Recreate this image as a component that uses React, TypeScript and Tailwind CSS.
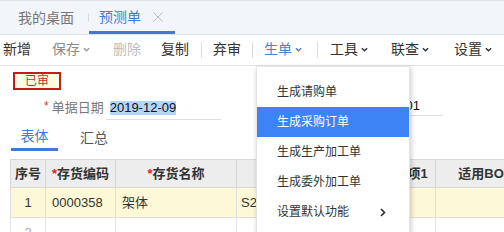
import React from 'react';

function Chevron({ color }: { color: string }) {
  return (
    <svg width="7" height="5" viewBox="0 0 8 5" className="ml-[3px]">
      <path d="M1 1 L4 4 L7 1" fill="none" stroke={color} strokeWidth="1.7" />
    </svg>
  );
}

function Sep({ ml }: { ml: string }) {
  return <span className={`${ml} w-px h-[16px] bg-[#dcdcdc]`} />;
}

const menuItems = ['生成请购单', '生成采购订单', '生成生产加工单', '生成委外加工单', '设置默认功能'];

export default function App() {
  return (
    <div className="relative w-[504px] h-[232px] overflow-hidden bg-white text-[#333] font-['Liberation_Sans','Noto_Sans_CJK_SC',sans-serif]">
      {/* window tabs */}
      <div className="h-[35px] bg-[#f2f5fa] border-t border-[#e2e5ea] border-b border-b-[#dde1e7] flex items-stretch text-[14px]">
        <div className="w-[88px] flex items-center pl-[18px] pt-[2px] text-[#777]">我的桌面</div>
        <div className="w-px bg-[#d9dde3] my-[12px]" />
        <div className="w-[86px] flex items-center pl-[10px] pt-[2px] border-b-[3px] border-[#3f7ad6] text-[#3f7ad6]">
          <span>预测单</span>
          <svg width="10" height="10" viewBox="0 0 10 10" className="ml-[12px]">
            <path d="M0.5 0.5 L9.5 9.5 M9.5 0.5 L0.5 9.5" stroke="#bcbcbc" strokeWidth="1" />
          </svg>
        </div>
      </div>

      {/* toolbar */}
      <div className="h-[31px] border-b border-[#e3e3e3] flex items-center text-[14px] pb-[1px]">
        <span className="ml-[3px]">新增</span>
        <span className="ml-[21px] flex items-center text-[#8a8a8a]">保存<Chevron color="#9a9a9a" /></span>
        <span className="ml-[23px] text-[#bdbdbd]">删除</span>
        <span className="ml-[20px]">复制</span>
        <Sep ml="ml-[12px]" />
        <span className="ml-[11px]">弃审</span>
        <Sep ml="ml-[11px]" />
        <span className="ml-[11px] flex items-center text-[#4a80d6]">生单<Chevron color="#4a80d6" /></span>
        <Sep ml="ml-[15px]" />
        <span className="ml-[12px] flex items-center">工具<Chevron color="#333" /></span>
        <span className="ml-[23px] flex items-center">联查<Chevron color="#333" /></span>
        <span className="ml-[25px] flex items-center">设置<Chevron color="#333" /></span>
      </div>

      {/* form */}
      <div className="pt-[6px]">
        <div className="ml-[13px] w-[48px] h-[18px] border-2 border-[#c41c1c] bg-[#fffbe3] flex items-center justify-center text-[12px] text-[#b8322a] leading-none">
          已审
        </div>
        <div className="flex items-start mt-[6px] text-[13px]">
          <div className="flex items-center h-[24px]">
            <span className="ml-[44px] text-[#d33] text-[12px] -mt-[4px]">*</span>
            <span className="ml-[3px] text-[#777]">单据日期</span>
          </div>
          <div className="ml-[2px] w-[115px] h-[24px] border-b border-[#dedede] flex items-center pl-[4px]">
            <span className="bg-[#b4d5fd] leading-[14px] text-[#111]">2019-12-09</span>
          </div>
          <div className="ml-[68px] flex items-center h-[20px]">
            <span className="text-[#777]">单据编号</span>
          </div>
          <div className="ml-[4px] w-[98px] h-[20px] border-b border-[#dedede] flex items-center pl-[3px]">
            <span className="text-[#111]">0000000001</span>
          </div>
        </div>

        {/* inner tabs */}
        <div className="flex mt-[5px] pl-[11px] text-[14px]">
          <div className="w-[47px] h-[26px] border-b-[3px] border-[#3d7bd8] text-[#3d7bd8] flex items-center justify-center">表体</div>
          <div className="ml-[22px] h-[26px] flex items-center text-[#555]">汇总</div>
        </div>

        {/* grid */}
        <div className="mt-[8px] ml-[10px] w-[494px] overflow-hidden">
          <table className="table-fixed border-collapse text-[13px] w-[527px]">
            <colgroup>
              <col className="w-[35px]" />
              <col className="w-[70px]" />
              <col className="w-[121px]" />
              <col className="w-[124px]" />
              <col className="w-[75px]" />
              <col className="w-[102px]" />
            </colgroup>
            <thead>
              <tr className="h-[28px] bg-[#ededed] font-semibold">
                <th className="border border-[#d8d8d8] font-semibold">序号</th>
                <th className="border border-[#d8d8d8] font-semibold"><span className="text-[#d22]">*</span>存货编码</th>
                <th className="border border-[#d8d8d8] font-semibold"><span className="text-[#d22]">*</span>存货名称</th>
                <th className="border border-[#d8d8d8] font-semibold">规格型号</th>
                <th className="border border-[#d8d8d8] font-semibold whitespace-nowrap">自定义项1</th>
                <th className="border border-[#d8d8d8] font-semibold whitespace-nowrap">适用BOM</th>
              </tr>
            </thead>
            <tbody>
              <tr className="h-[30px] bg-[#fdf8d5]">
                <td className="border border-[#dedede] text-center">1</td>
                <td className="border border-[#dedede] pl-[6px]">0000358</td>
                <td className="border border-[#dedede] pl-[6px]">架体</td>
                <td className="border border-[#dedede] pl-[4px]">S2</td>
                <td className="border border-[#dedede]" />
                <td className="border border-[#dedede]" />
              </tr>
              <tr className="h-[30px]">
                <td className="border border-[#e4e4e4] text-center text-[#aaa]">2</td>
                <td className="border border-[#e4e4e4]" />
                <td className="border border-[#e4e4e4]" />
                <td className="border border-[#e4e4e4]" />
                <td className="border border-[#e4e4e4]" />
                <td className="border border-[#e4e4e4]" />
              </tr>
            </tbody>
          </table>
        </div>
      </div>

      {/* dropdown menu */}
      <div className="absolute left-[256px] top-[66px] w-[154px] h-[180px] bg-white border border-[#e6e6e6] shadow-[1px_2px_5px_rgba(0,0,0,0.22)] pt-[10px] text-[12px]">
        {menuItems.map((item, i) => (
          <div
            key={item}
            className={`h-[30px] flex items-center pl-[20px] pr-[23px] ${i === 1 ? 'bg-[#3d83f5] text-white' : 'text-[#333]'}`}
          >
            <span className="flex-1">{item}</span>
            {i === 4 && (
              <svg width="6" height="9" viewBox="0 0 6 9">
                <path d="M1 1 L4.5 4.5 L1 8" fill="none" stroke="#333" strokeWidth="1.7" />
              </svg>
            )}
          </div>
        ))}
      </div>
    </div>
  );
}
